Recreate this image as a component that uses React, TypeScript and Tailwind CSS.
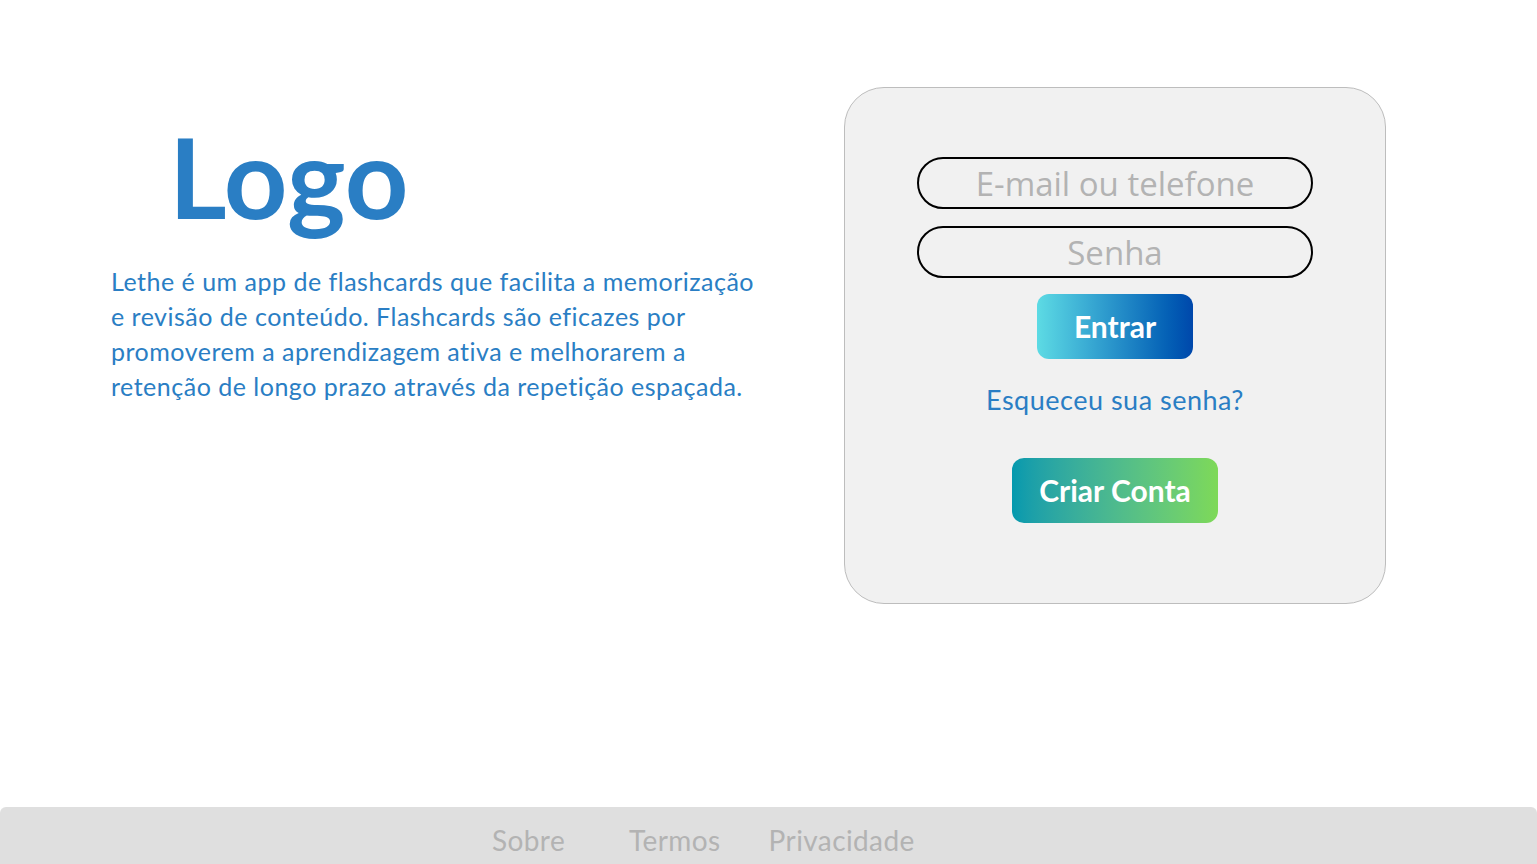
export default function App() {
  return (
    <div className="flex min-h-screen flex-col bg-white font-['Lato',sans-serif]">
      <main className="flex flex-1 items-start pl-[111px] pt-[87px]">
        <section className="w-[700px] pt-[34px]">
          <h1 className="pl-[58px] text-[111px] font-bold leading-[1] text-[#2a7ec4]">
            Logo
          </h1>
          <p className="mt-[32px] w-[660px] text-[25px] leading-[35px] tracking-[0.5px] text-[#2a7ec4]">
            Lethe é um app de flashcards que facilita a memorização e revisão de
            conteúdo. Flashcards são eficazes por promoverem a aprendizagem ativa
            e melhorarem a retenção de longo prazo através da repetição espaçada.
          </p>
        </section>

        <div className="ml-[33px] flex h-[517px] w-[542px] flex-col items-center rounded-[40px] border border-[#bdbdbd] bg-[#f1f1f1] pt-[69px]">
          <input
            type="text"
            placeholder="E-mail ou telefone"
            className="h-[52px] w-[396px] rounded-full border-2 border-black bg-transparent text-center font-['Open_Sans',sans-serif] text-[33px] text-black outline-none placeholder:text-[#b3b3b3]"
          />
          <input
            type="password"
            placeholder="Senha"
            className="mt-[17px] h-[52px] w-[396px] rounded-full border-2 border-black bg-transparent text-center font-['Open_Sans',sans-serif] text-[33px] text-black outline-none placeholder:text-[#b3b3b3]"
          />
          <button className="mt-[16px] h-[65px] w-[156px] rounded-[12px] bg-gradient-to-r from-[#5ddbe4] to-[#0047ab] text-[30px] font-bold text-white">
            Entrar
          </button>
          <a href="#" className="mt-[21px] text-[27px] tracking-[0.5px] text-[#2a7ec4]">
            Esqueceu sua senha?
          </a>
          <button className="mt-[37px] h-[65px] w-[206px] rounded-[12px] bg-gradient-to-r from-[#0399ae] to-[#7ed957] text-[30px] font-bold text-white">
            Criar Conta
          </button>
        </div>
      </main>

      <footer className="flex h-[57px] items-center rounded-t-[6px] bg-[#dfdfdf] pl-[492px] pt-[8px] text-[28px] tracking-[0.4px] text-[#b3b3b3]">
        <a href="#">Sobre</a>
        <a href="#" className="ml-[64px]">
          Termos
        </a>
        <a href="#" className="ml-[48px]">
          Privacidade
        </a>
      </footer>
    </div>
  );
}
